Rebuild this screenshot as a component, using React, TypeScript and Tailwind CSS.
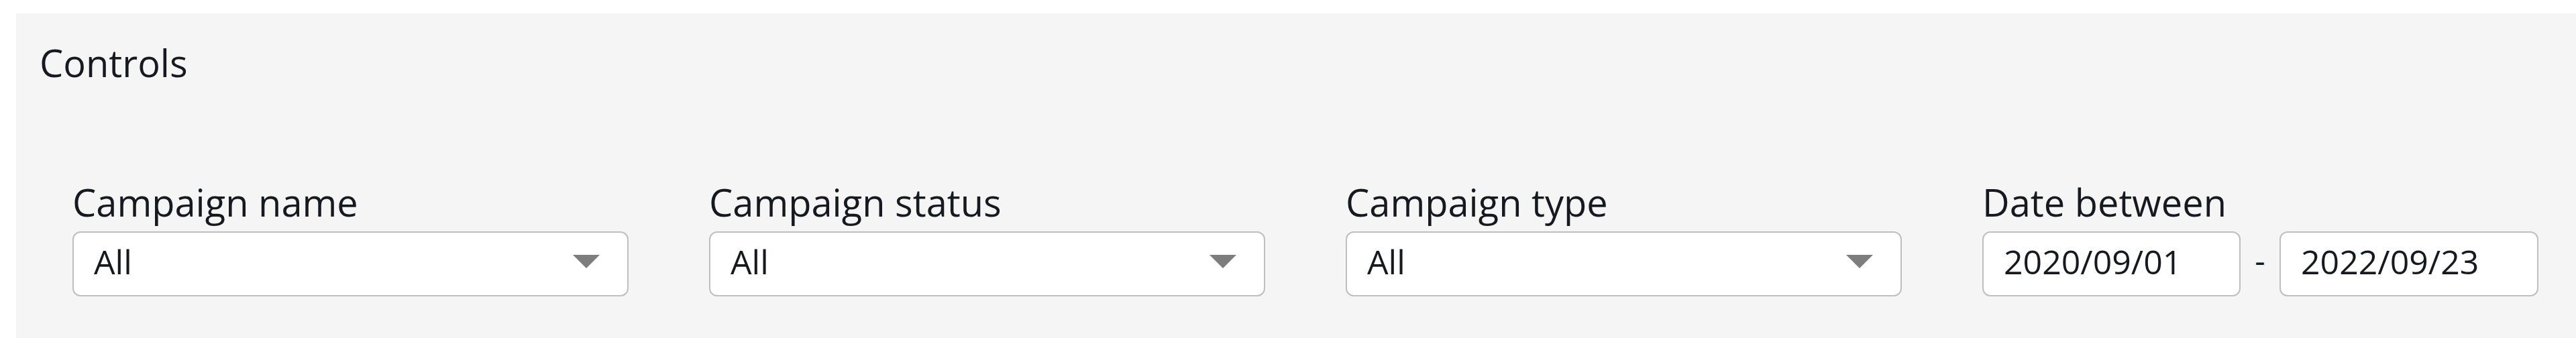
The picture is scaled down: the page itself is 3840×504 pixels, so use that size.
const selects = ["Campaign name", "Campaign status", "Campaign type"]

function Caret() {
  return (
    <svg width="40" height="20" viewBox="0 0 40 20" className="shrink-0">
      <path d="M0 0 H40 L20 20 Z" fill="#7d7d7d" />
    </svg>
  )
}

function Field({ label, children }: { label: string; children: React.ReactNode }) {
  return (
    <div className="flex flex-col">
      <label className="text-[56px] leading-none text-[#16191f] mb-[16px]">{label}</label>
      {children}
    </div>
  )
}

function Box({ value, wide }: { value: string; wide?: boolean }) {
  return (
    <div className="h-[97px] flex items-center justify-between bg-white border-2 border-[#bfbfbf] rounded-[12px] pl-[30px] pr-[41px] pb-[7px]">
      <span className="text-[50px] leading-none text-[#16191f]">{value}</span>
      {wide && <Caret />}
    </div>
  )
}

export default function App() {
  return (
    <div className="h-[504px] w-[3840px] bg-white pt-[20px] pl-[24px] font-['Open_Sans',sans-serif]">
      <section className="h-full bg-[#f5f5f5] pt-[45px]">
        <h2 className="text-[56px] leading-none text-[#16191f] pl-[35px]">Controls</h2>

        <div className="mt-[152px] pl-[84px] grid grid-cols-[repeat(4,829px)] gap-x-[120px]">
          {selects.map((s) => (
            <Field key={s} label={s}>
              <Box value="All" wide />
            </Field>
          ))}

          <Field label="Date between">
            <div className="flex items-center">
              <div className="w-[385px]">
                <Box value="2020/09/01" />
              </div>
              <span className="flex-1 text-center text-[48px] leading-none text-[#16191f] pb-[12px]">-</span>
              <div className="w-[386px]">
                <Box value="2022/09/23" />
              </div>
            </div>
          </Field>
        </div>
      </section>
    </div>
  )
}
